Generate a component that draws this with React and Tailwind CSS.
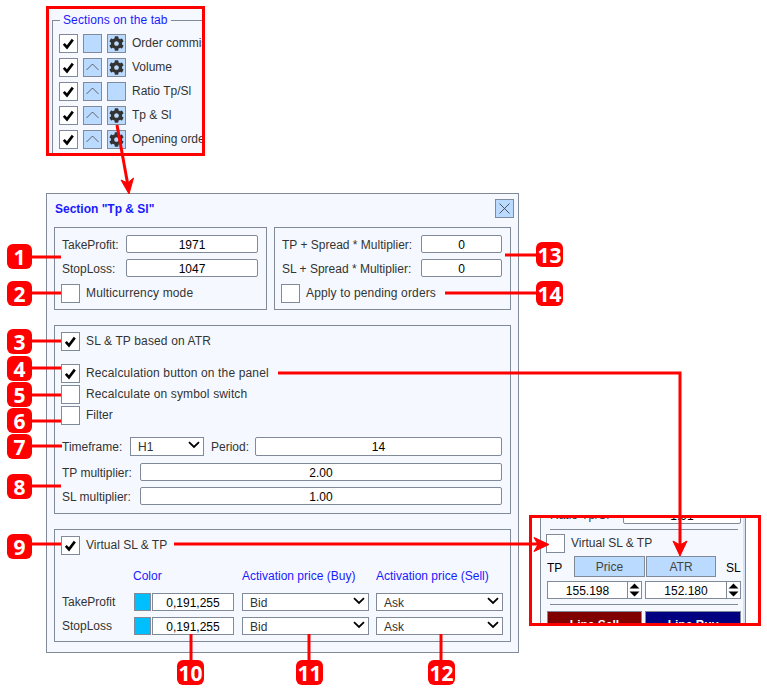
import { FaCog } from "react-icons/fa"

const badges = [
  { n: 1, cls: "left-[7px] top-[244px] w-[25px]" },
  { n: 2, cls: "left-[7px] top-[281px] w-[25px]" },
  { n: 3, cls: "left-[7px] top-[329px] w-[25px]" },
  { n: 4, cls: "left-[7px] top-[356px] w-[25px]" },
  { n: 5, cls: "left-[7px] top-[382px] w-[25px]" },
  { n: 6, cls: "left-[7px] top-[408px] w-[25px]" },
  { n: 7, cls: "left-[7px] top-[434px] w-[25px]" },
  { n: 8, cls: "left-[7px] top-[474px] w-[25px]" },
  { n: 9, cls: "left-[7px] top-[534px] w-[25px]" },
  { n: 10, cls: "left-[177px] top-[660px] w-[27px]" },
  { n: 11, cls: "left-[296px] top-[660px] w-[27px]" },
  { n: 12, cls: "left-[428px] top-[660px] w-[27px]" },
  { n: 13, cls: "left-[536px] top-[242px] w-[27px]" },
  { n: 14, cls: "left-[536px] top-[281px] w-[27px]" },
]

// Red leader lines: [x1, y1, x2, y2]
const leaders = [
  [32, 257, 61, 257],
  [32, 293, 61, 293],
  [32, 341, 61, 341],
  [32, 368, 61, 368],
  [32, 395, 61, 395],
  [32, 421, 61, 421],
  [32, 446, 62, 446],
  [32, 486, 61, 486],
  [32, 544, 61, 544],
  [191, 634, 191, 660],
  [309, 634, 309, 660],
  [441, 634, 441, 660],
  [505, 255, 536, 255],
  [445, 293, 536, 293],
  [174, 544, 538, 544],
]

function Check() {
  return (
    <svg viewBox="0 0 17 17" className="w-[17px] h-[17px]">
      <path d="M3.8 8.8 L7 12.4 L12.8 4.6" fill="none" stroke="#000" strokeWidth="2.6" />
    </svg>
  )
}

function Checkbox({ checked, label, wide }) {
  return (
    <div className="flex items-center h-[19px]">
      <div className="w-[19px] h-[19px] shrink-0 border border-[#808a99] bg-white flex items-center justify-center">
        {checked && <Check />}
      </div>
      {label && (
        <span className={`ml-[6px] -mt-[2px] whitespace-nowrap ${wide ? "tracking-[0.14px]" : ""}`}>{label}</span>
      )}
    </div>
  )
}

function Field({ value, className }) {
  return (
    <div
      className={`h-[18px] pt-px border border-[#808a99] rounded-[2px] bg-white flex items-center justify-center text-black ${className}`}
    >
      {value}
    </div>
  )
}

function Select({ value, className }) {
  return (
    <div className={`h-[18px] border border-[#808a99] bg-white flex items-center justify-between pl-[7px] pr-[3px] ${className}`}>
      <span className="pt-px">{value}</span>
      <svg viewBox="0 0 12 8" className="w-[12px] h-[8px] -mt-[3px]">
        <path d="M1 1.2 L6 6 L11 1.2" fill="none" stroke="#000" strokeWidth="1.8" />
      </svg>
    </div>
  )
}

function BlueButton({ children }) {
  return (
    <div className="w-[19px] h-[19px] shrink-0 border border-[#808a99] bg-[#bbdaff] flex items-center justify-center text-[#333]">
      {children}
    </div>
  )
}

function Chevron() {
  return (
    <svg viewBox="0 0 17 17" className="w-[17px] h-[17px]">
      <path d="M2.5 11 L8.5 5 L14.5 11" fill="none" stroke="#444" strokeWidth="0.8" />
    </svg>
  )
}

function SectionRow({ chevron, gear, label }) {
  return (
    <div className="flex items-center h-[19px] whitespace-nowrap">
      <Checkbox checked />
      <div className="ml-[5px]">
        <BlueButton>{chevron && <Chevron />}</BlueButton>
      </div>
      <div className="ml-[5px]">
        <BlueButton>{gear && <FaCog className="w-[15px] h-[15px]" />}</BlueButton>
      </div>
      <span className="ml-[6px] -mt-[2px]">{label}</span>
    </div>
  )
}

function Spinner() {
  return (
    <div className="w-[15px] h-[18px] -ml-px border border-[#808a99] bg-white flex items-center justify-center shrink-0">
      <svg viewBox="0 0 13 16" className="w-[13px] h-[16px]">
        <path d="M6.5 1.5 L11.5 6.5 H1.5 Z M6.5 14.5 L11.5 9.5 H1.5 Z" fill="#000" />
      </svg>
    </div>
  )
}

export default function App() {
  return (
    <div className="relative w-[767px] h-[691px] bg-white overflow-hidden text-[12px] leading-[14px] text-[#333] font-['Liberation_Sans',Arial,sans-serif]">
      {/* Sections list */}
      <div className="absolute left-[46px] top-[6px] w-[159px] h-[150px] border-[3px] border-[#f00] bg-[#f5f9ff] overflow-hidden">
        <fieldset className="ml-[3px] mt-[4px] w-[180px] h-[160px] border border-[#808a99] pl-[6px]">
          <legend className="ml-[1px] px-[3px] text-[#1a1aff] tracking-[0.1px]">Sections on the tab</legend>
          <div className="mt-[7px] flex flex-col gap-[5px]">
            <SectionRow gear label="Order commission" />
            <SectionRow chevron gear label="Volume" />
            <SectionRow chevron label="Ratio Tp/Sl" />
            <SectionRow chevron gear label="Tp & Sl" />
            <SectionRow chevron gear label="Opening orders" />
          </div>
        </fieldset>
      </div>

      {/* Section dialog */}
      <div className="absolute left-[46px] top-[193px] w-[473px] h-[460px] border border-[#808a99] bg-[#f5f9ff] px-[7px]">
        <div className="flex items-center justify-between h-[33px] pb-[1px]">
          <span className="ml-[1px] -mt-[2px] font-bold text-[#1a1aff]">Section "Tp &amp; Sl"</span>
          <div className="w-[19px] h-[19px] mr-[-3px] mb-[3px] border border-[#808a99] bg-[#bbdaff] flex items-center justify-center">
            <svg viewBox="0 0 17 17" className="w-[17px] h-[17px]">
              <path d="M3.5 3.5 L13.5 13.5 M13.5 3.5 L3.5 13.5" stroke="#444" strokeWidth="0.9" />
            </svg>
          </div>
        </div>

        <div className="flex gap-[7px]">
          <div className="w-[213px] h-[83px] border border-[#808a99] pl-[6px] pt-[7px]">
            <div className="flex items-center h-[18px]">
              <span className="w-[65px] pl-[1px] pt-px">TakeProfit:</span>
              <Field value="1971" className="w-[132px]" />
            </div>
            <div className="flex items-center h-[18px] mt-[6px]">
              <span className="w-[65px] pl-[1px] pt-px">StopLoss:</span>
              <Field value="1047" className="w-[132px]" />
            </div>
            <div className="mt-[7px]">
              <Checkbox wide label="Multicurrency mode" />
            </div>
          </div>
          <div className="w-[237px] h-[83px] border border-[#808a99] pl-[6px] pt-[7px]">
            <div className="flex items-center h-[18px]">
              <span className="w-[140px] pl-[1px] pt-px">TP + Spread * Multiplier:</span>
              <Field value="0" className="w-[81px]" />
            </div>
            <div className="flex items-center h-[18px] mt-[6px]">
              <span className="w-[140px] pl-[1px] pt-px">SL + Spread * Multiplier:</span>
              <Field value="0" className="w-[81px]" />
            </div>
            <div className="mt-[7px]">
              <Checkbox wide label="Apply to pending orders" />
            </div>
          </div>
        </div>

        <div className="mt-[15px] h-[189px] border border-[#808a99] pl-[6px] pr-[8px] pt-[6px]">
          <Checkbox checked wide label="SL & TP based on ATR" />
          <div className="mt-[13px] flex flex-col gap-[2px]">
            <Checkbox checked wide label="Recalculation button on the panel" />
            <Checkbox wide label="Recalculate on symbol switch" />
            <Checkbox label="Filter" />
          </div>
          <div className="mt-[12px] flex items-center h-[19px]">
            <span className="w-[69px] pl-[1px] pt-px">Timeframe:</span>
            <Select value="H1" className="w-[74px] h-[19px]" />
            <span className="ml-[7px] w-[44px] pt-px">Period:</span>
            <Field value="14" className="flex-1 h-[19px]" />
          </div>
          <div className="mt-[7px] flex items-center h-[18px]">
            <span className="w-[79px] pl-[1px] pt-px">TP multiplier:</span>
            <Field value="2.00" className="flex-1" />
          </div>
          <div className="mt-[6px] flex items-center h-[18px]">
            <span className="w-[79px] pl-[1px] pt-px">SL multiplier:</span>
            <Field value="1.00" className="flex-1" />
          </div>
        </div>

        <div className="mt-[15px] h-[113px] border border-[#808a99] pl-[6px] pt-[6px]">
          <Checkbox checked label="Virtual SL & TP" />
          <div className="mt-[14px] flex h-[14px] text-[#1a1aff]">
            <span className="ml-[72px] w-[109px]">Color</span>
            <span className="w-[134px]">Activation price (Buy)</span>
            <span>Activation price (Sell)</span>
          </div>
          <div className="mt-[10px] flex items-center h-[18px]">
            <span className="w-[73px] pl-[1px] -mt-px">TakeProfit</span>
            <div className="w-[17px] h-[18px] border border-[#808a99] bg-[#00bfff]" />
            <Field value="0,191,255" className="w-[82px] ml-[1px] rounded-none" />
            <Select value="Bid" className="w-[127px] ml-[8px]" />
            <Select value="Ask" className="w-[127px] ml-[7px]" />
          </div>
          <div className="mt-[6px] flex items-center h-[18px]">
            <span className="w-[73px] pl-[1px] -mt-px">StopLoss</span>
            <div className="w-[17px] h-[18px] border border-[#808a99] bg-[#00bfff]" />
            <Field value="0,191,255" className="w-[82px] ml-[1px] rounded-none" />
            <Select value="Bid" className="w-[127px] ml-[8px]" />
            <Select value="Ask" className="w-[127px] ml-[7px]" />
          </div>
        </div>
      </div>

      {/* Trade panel fragment */}
      <div className="absolute left-[529px] top-[515px] w-[232px] h-[111px] border-[3px] border-[#f00] bg-white overflow-hidden">
        <div className="ml-[8px] w-[206px] h-[200px] border-x border-[#808a99] bg-[#f5f9ff] shadow-[inset_-2px_0_0_#d5e2f2] pl-[6px]">
          <div className="-mt-[12px] flex items-center h-[18px]">
            <span className="w-[76px] pl-[3px]">Ratio Tp/Sl</span>
            <Field value="1.91" className="w-[118px]" />
          </div>
          <div className="mt-[5px] ml-[3px] w-[188px] h-px bg-[#808a99]" />
          <div className="mt-[4px] -ml-[1px]">
            <Checkbox label="Virtual SL & TP" />
          </div>
          <div className="mt-[3px] flex items-center h-[21px]">
            <span className="w-[27px] text-black pt-[3px]">TP</span>
            <div className="w-[71px] h-[21px] border border-[#808a99] bg-[#bbdaff] flex items-center justify-center text-[#444]">Price</div>
            <div className="w-[70px] h-[21px] ml-px border border-[#808a99] bg-[#bbdaff] flex items-center justify-center text-[#444]">ATR</div>
            <span className="ml-[10px] text-black pt-[3px]">SL</span>
          </div>
          <div className="mt-[4px] flex items-center h-[18px]">
            <Field value="155.198" className="w-[81px] rounded-none" />
            <Spinner />
            <Field value="152.180" className="w-[82px] ml-[3px] rounded-none" />
            <Spinner />
          </div>
          <div className="mt-[5px] ml-[3px] w-[188px] h-px bg-[#808a99]" />
          <div className="mt-[6px] flex">
            <div className="w-[95px] h-[28px] border border-[#808a99] bg-[#800000] flex items-center justify-center text-white font-bold">Line Sell</div>
            <div className="w-[96px] h-[28px] ml-[3px] border border-[#808a99] bg-[#000080] flex items-center justify-center text-white font-bold">Line Buy</div>
          </div>
        </div>
      </div>

      {/* Leader lines and arrows */}
      <svg className="absolute left-0 top-0 w-[767px] h-[691px] pointer-events-none" viewBox="0 0 767 691">
        {leaders.map(([x1, y1, x2, y2], i) => (
          <line key={i} x1={x1} y1={y1} x2={x2} y2={y2} stroke="#f00" strokeWidth="3" />
        ))}
        <path d="M278 373 H680 V545" fill="none" stroke="#f00" strokeWidth="3" />
        <path d="M680 556 L673 541 L680 545 L687 541 Z" fill="#f00" stroke="#f00" />
        <path d="M549 544.5 L534 537.5 L538 544.5 L534 551.5 Z" fill="#f00" stroke="#f00" />
        <path d="M117 125 L127.5 183" fill="none" stroke="#f00" strokeWidth="3" />
        <path d="M129 194 L121 180 L127.5 183 L133.5 178 Z" fill="#f00" stroke="#f00" />
      </svg>

      {badges.map((b) => (
        <div
          key={b.n}
          className={`absolute ${b.cls} h-[25px] rounded-[6px] bg-[#f00] flex items-center justify-center text-white text-[21px] font-bold font-['Open_Sans',sans-serif]`}
        >
          {b.n}
        </div>
      ))}
    </div>
  )
}
